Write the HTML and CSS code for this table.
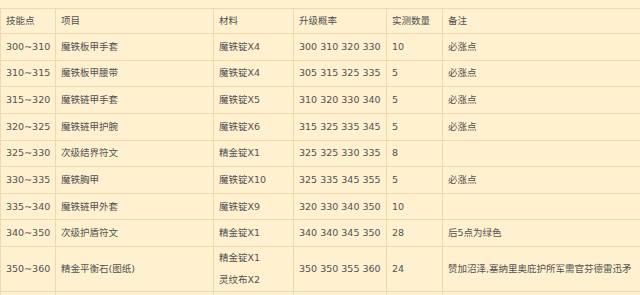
FILE: index.html
```html
<!DOCTYPE html>
<html lang="zh-CN">
<head>
<meta charset="utf-8">
<title>技能点表</title>
<link rel="stylesheet" href="styles.css">
</head>
<body>
<div class="page">
<table class="skill-table">
  <colgroup>
    <col class="c1"><col class="c2"><col class="c3"><col class="c4"><col class="c5"><col class="c6">
  </colgroup>
  <thead>
    <tr class="head-row">
      <td>技能点</td><td>项目</td><td>材料</td><td>升级概率</td><td>实测数量</td><td>备注</td>
    </tr>
  </thead>
  <tbody>
    <tr class="row"><td>300~310</td><td>魔铁板甲手套</td><td>魔铁锭X4</td><td>300 310 320 330</td><td>10</td><td>必涨点</td></tr>
    <tr class="row"><td>310~315</td><td>魔铁板甲腰带</td><td>魔铁锭X4</td><td>305 315 325 335</td><td>5</td><td>必涨点</td></tr>
    <tr class="row"><td>315~320</td><td>魔铁链甲手套</td><td>魔铁锭X5</td><td>310 320 330 340</td><td>5</td><td>必涨点</td></tr>
    <tr class="row"><td>320~325</td><td>魔铁链甲护腕</td><td>魔铁锭X6</td><td>315 325 335 345</td><td>5</td><td>必涨点</td></tr>
    <tr class="row"><td>325~330</td><td>次级结界符文</td><td>精金锭X1</td><td>325 325 330 335</td><td>8</td><td></td></tr>
    <tr class="row"><td>330~335</td><td>魔铁胸甲</td><td>魔铁锭X10</td><td>325 335 345 355</td><td>5</td><td>必涨点</td></tr>
    <tr class="row"><td>335~340</td><td>魔铁链甲外套</td><td>魔铁锭X9</td><td>320 330 340 350</td><td>10</td><td></td></tr>
    <tr class="row"><td>340~350</td><td>次级护盾符文</td><td>精金锭X1</td><td>340 340 345 350</td><td>28</td><td>后5点为绿色</td></tr>
    <tr class="row-tall"><td>350~360</td><td>精金平衡石(图纸)</td><td class="multi">精金锭X1<br>灵纹布X2</td><td>350 350 355 360</td><td>24</td><td>赞加沼泽,塞纳里奥庇护所军需官芬德雷迅矛</td></tr>
    <tr class="row"><td></td><td></td><td></td><td></td><td></td><td></td></tr>
  </tbody>
</table>
</div>
</body>
</html>
```
FILE: styles.css
```css
html, body {
  margin: 0;
  padding: 0;
  background: #fff0cf;
  overflow: hidden;
}
.page {
  width: 640px;
  height: 295px;
  overflow: hidden;
  padding-top: 8px;
  box-sizing: border-box;
}
.skill-table {
  border-collapse: collapse;
  table-layout: fixed;
  width: 740px;
  font-family: "DejaVu Sans", "Noto Sans CJK SC", sans-serif;
  font-size: 9.5px;
  color: #525252;
}
.c1 { width: 55px; }
.c2 { width: 158px; }
.c3 { width: 80px; }
.c4 { width: 93px; }
.c5 { width: 56px; }
.c6 { width: 298px; }
.skill-table td {
  border: 1px solid #eed9ae;
  padding: 0 4px 0 5px;
  vertical-align: middle;
  white-space: nowrap;
  overflow: hidden;
  line-height: 14px;
}
.head-row { height: 25px; }
.row { height: 26.625px; }
.row-tall { height: 43px; }
.skill-table td.multi { line-height: 22px; }
```
